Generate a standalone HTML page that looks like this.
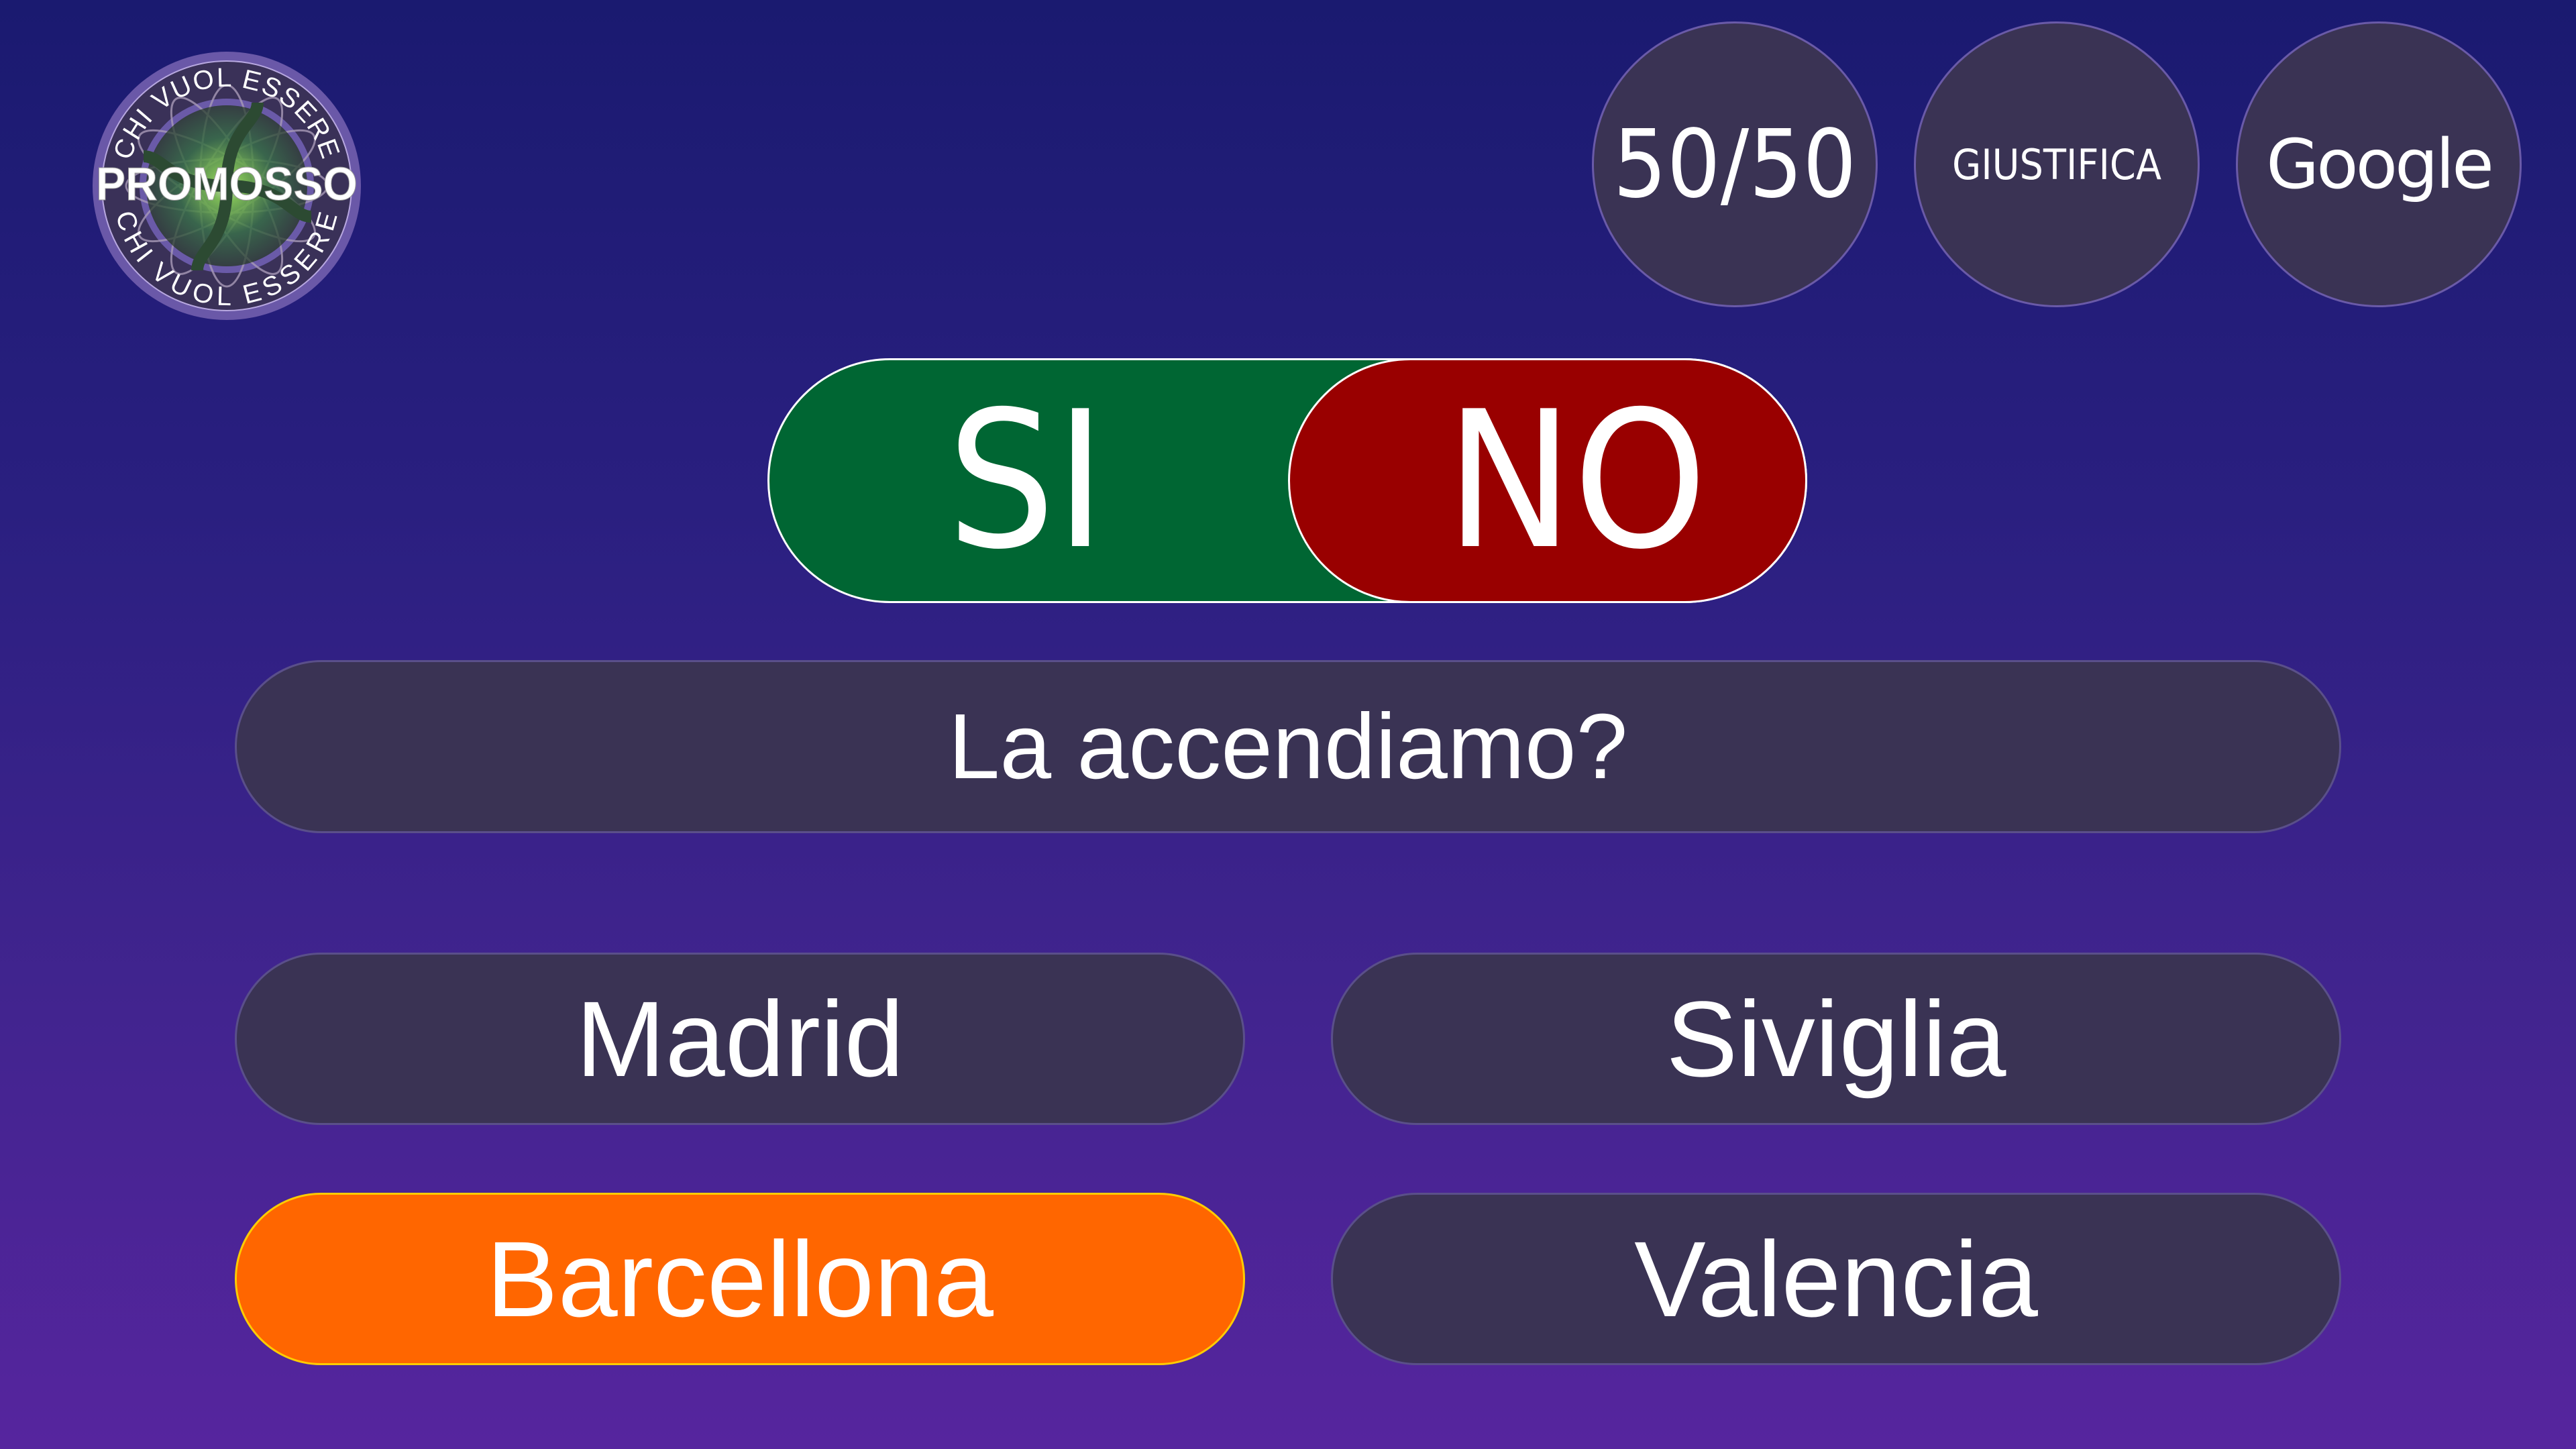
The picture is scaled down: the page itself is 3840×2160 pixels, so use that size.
<!DOCTYPE html>
<html><head><meta charset="utf-8"><style>
html,body{margin:0;padding:0}
body{width:3840px;height:2160px;overflow:hidden;position:relative;
background:linear-gradient(180deg,#1a1a70 0%,#2a1f80 35%,#42248f 70%,#56259e 100%);
font-family:"Liberation Sans",sans-serif;color:#fff}
.c{position:absolute;display:flex;align-items:center;justify-content:center;box-sizing:border-box}
.circ{width:426px;height:426px;border-radius:50%;background:#3a3354;border:3px solid #6a5aa8;top:32px;font-family:"DejaVu Sans Condensed","DejaVu Sans",sans-serif}
.pill{background:#3a3354;border:3px solid #5a4f8a;border-radius:130px}
</style></head><body>

<svg style="position:absolute;left:134px;top:73px" width="408" height="408" viewBox="0 0 408 408">
<defs>
<radialGradient id="g" cx="50%" cy="50%" r="50%"><stop offset="0" stop-color="#e8ffd0"/><stop offset="0.2" stop-color="#7bd23a"/><stop offset="0.6" stop-color="#2a6a35"/><stop offset="1" stop-color="#2c3d30"/></radialGradient>
<radialGradient id="in" cx="50%" cy="50%" r="50%"><stop offset="0" stop-color="#8b7ab8"/><stop offset="1" stop-color="#4c3f78"/></radialGradient>
<path id="top" d="M56,204 A148,148 0 0 1 352,204"/>
<path id="bot" d="M64,214 A140,140 0 0 0 344,214"/>
</defs>
<circle cx="204" cy="204" r="200" fill="#6a58a8"/>
<circle cx="204" cy="204" r="186" fill="#3a3158" stroke="#b8a8e0" stroke-width="2"/>
<circle cx="204" cy="204" r="125" fill="url(#in)" stroke="#6a5aa8" stroke-width="10"/>
<g fill="none" stroke="#a89ab8" stroke-width="3" opacity="0.8">
<ellipse cx="204" cy="204" rx="150" ry="40"/><ellipse cx="204" cy="204" rx="150" ry="40" transform="rotate(30 204 204)"/><ellipse cx="204" cy="204" rx="150" ry="40" transform="rotate(60 204 204)"/><ellipse cx="204" cy="204" rx="150" ry="40" transform="rotate(90 204 204)"/><ellipse cx="204" cy="204" rx="150" ry="40" transform="rotate(120 204 204)"/><ellipse cx="204" cy="204" rx="150" ry="40" transform="rotate(150 204 204)"/>
</g>
<circle cx="204" cy="204" r="120" fill="url(#g)" opacity="0.75"/>
<g fill="none" stroke="#2c4a32" stroke-width="18">
<path d="M204,204 C204,120 250,110 250,80"/><path d="M204,204 C204,290 160,300 160,330"/>
<path d="M204,204 C290,204 300,250 330,250"/><path d="M204,204 C120,204 110,160 80,160"/>
</g>
<text font-family="Liberation Sans,sans-serif" font-size="40" fill="#fff" letter-spacing="2"><textPath href="#top" startOffset="50%" text-anchor="middle">CHI VUOL ESSERE</textPath></text>
<text font-family="Liberation Sans,sans-serif" font-size="40" fill="#fff" letter-spacing="2"><textPath href="#bot" startOffset="50%" text-anchor="middle" dominant-baseline="hanging">CHI VUOL ESSERE</textPath></text>
<text x="204" y="225" text-anchor="middle" font-family="Liberation Sans,sans-serif" font-weight="bold" font-size="70" fill="#fff" stroke="#999" stroke-width="1" textLength="390" lengthAdjust="spacingAndGlyphs">PROMOSSO</text>
</svg>

<div class="c circ" style="left:2373px;font-size:140px">50/50</div>
<div class="c circ" style="left:2853px;font-size:62px">GIUSTIFICA</div>
<div class="c circ" style="left:3333px;font-size:102px;font-family:'DejaVu Sans',sans-serif;letter-spacing:-4px">Google</div>

<div class="c" style="left:1144px;top:534px;width:1550px;height:365px;border-radius:183px;background:#006633;border:3px solid #fff"></div>
<div class="c" style="left:1920px;top:534px;width:774px;height:365px;border-radius:183px;background:#990000;border:3px solid #fff"></div>
<div class="c" style="left:1330px;top:534px;width:400px;height:365px;font-size:282px;font-family:'DejaVu Sans Condensed','DejaVu Sans',sans-serif">SI</div>
<div class="c" style="left:2100px;top:534px;width:500px;height:365px;font-size:282px;font-family:'DejaVu Sans Condensed','DejaVu Sans',sans-serif">NO</div>

<div class="c pill" style="left:350px;top:984px;width:3140px;height:258px;font-size:138px">La accendiamo?</div>
<div class="c pill" style="left:350px;top:1420px;width:1506px;height:257px;font-size:160px">Madrid</div>
<div class="c pill" style="left:1984px;top:1420px;width:1506px;height:257px;font-size:160px">Siviglia</div>
<div class="c pill" style="left:350px;top:1778px;width:1506px;height:257px;font-size:160px;background:#ff6600;border-color:#ffcc00">Barcellona</div>
<div class="c pill" style="left:1984px;top:1778px;width:1506px;height:257px;font-size:160px">Valencia</div>
</body></html>
